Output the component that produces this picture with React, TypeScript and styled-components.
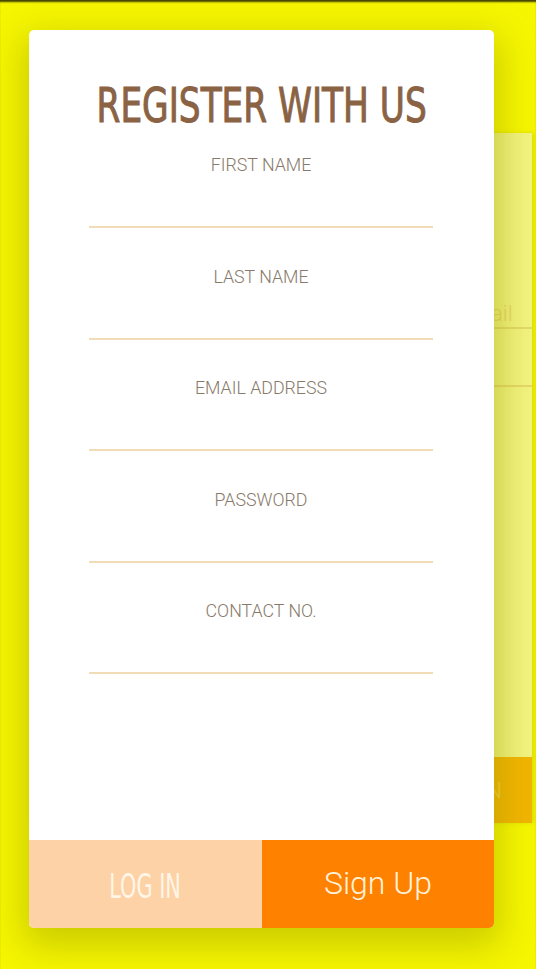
import styled, { createGlobalStyle } from 'styled-components';

const GlobalStyle = createGlobalStyle`
  html, body {
    margin: 0;
    padding: 0;
  }
  body {
    font-family: Roboto, 'Liberation Sans', sans-serif;
  }
`;

const Page = styled.div`
  box-sizing: border-box;
  width: 536px;
  height: 969px;
  overflow: hidden;
  padding: 30px 0 0 29px;
  background: #f6f600;
  box-shadow: inset 0 3px 2px -1px rgba(30, 30, 0, 0.85);
`;

const Stage = styled.div`
  display: grid;
  grid-template-columns: 465px 38px;
  grid-template-rows: 898px;
`;

const BackPanel = styled.div`
  grid-column: 1 / 3;
  grid-row: 1;
  align-self: start;
  margin-top: 103px;
  height: 690px;
  display: flex;
  flex-direction: column;
  align-items: flex-end;
  background: linear-gradient(90deg, #e6e76a 0%, #eef074 88%, #f3f482 100%);
  box-shadow: 2px 0 4px rgba(150, 150, 0, 0.25);
`;

const BackField = styled.div<{ top: number }>`
  box-sizing: border-box;
  width: 110px;
  height: 26px;
  margin-top: ${({ top }) => top}px;
  border-bottom: 2px solid #e4d86a;
  font-size: 22px;
  font-weight: 300;
  line-height: 22px;
  color: #e8d466;
  padding-left: 37px;
`;

const BackButton = styled.div`
  margin-top: auto;
  align-self: stretch;
  height: 66px;
  display: flex;
  align-items: center;
  justify-content: flex-end;
  padding-right: 30px;
  background: linear-gradient(90deg, #eda800, #f2b400);
  font-size: 22px;
  font-weight: 300;
  color: #f6cf3a;
`;

const Card = styled.div`
  grid-column: 1;
  grid-row: 1;
  z-index: 1;
  display: flex;
  flex-direction: column;
  background: #fff;
  border-radius: 5px;
  overflow: hidden;
  box-shadow: 0 12px 36px 6px rgba(150, 150, 0, 0.45);
`;

const Title = styled.h1`
  margin: 47px 0 0;
  height: 55px;
  display: flex;
  justify-content: center;
  align-items: center;
  font-family: 'DejaVu Sans Condensed', 'DejaVu Sans', sans-serif;
  font-weight: 400;
  font-size: 48px;
  color: #8a6244;
  -webkit-text-stroke: 1px #8a6244;
  white-space: nowrap;

  span {
    display: inline-block;
    transform: scaleX(0.795);
  }
`;

const Form = styled.div`
  display: flex;
  flex-direction: column;
  padding: 0 61px 0 60px;
`;

const Field = styled.div`
  display: flex;
  flex-direction: column;
  align-items: center;
  height: 111.5px;
`;

const Label = styled.label`
  margin-top: 23px;
  font-size: 17.8px;
  font-weight: 300;
  line-height: 20px;
  color: #887a6b;
`;

const Input = styled.div`
  align-self: stretch;
  margin-top: 51px;
  height: 2px;
  background: #f2dcb6;
`;

const Buttons = styled.div`
  margin-top: auto;
  display: grid;
  grid-template-columns: 233px 1fr;
  height: 88px;
`;

const Tab = styled.div<{ active?: boolean }>`
  display: flex;
  align-items: center;
  justify-content: center;
  background: ${({ active }) => (active ? '#ff8100' : '#fdd2a6')};
  color: ${({ active }) => (active ? '#fff3dc' : '#fff6e8')};
`;

const LoginText = styled.span`
  display: inline-block;
  margin-top: 4px;
  font-family: 'DejaVu Sans Condensed', 'DejaVu Sans', sans-serif;
  font-size: 33px;
  transform: scaleX(0.7);
`;

const SignUpText = styled.span`
  font-family: Roboto, sans-serif;
  font-weight: 300;
  font-size: 32px;
  margin-top: -2px;
`;

const fields = ['FIRST NAME', 'LAST NAME', 'EMAIL ADDRESS', 'PASSWORD', 'CONTACT NO.'];

const App = () => {
  return (
    <>
      <GlobalStyle />
      <Page>
        <Stage>
          <BackPanel>
            <BackField top={170}>Email</BackField>
            <BackField top={32} />
            <BackButton>N</BackButton>
          </BackPanel>
          <Card>
            <Title>
              <span>REGISTER WITH US</span>
            </Title>
            <Form>
              {fields.map((name) => (
                <Field key={name}>
                  <Label>{name}</Label>
                  <Input />
                </Field>
              ))}
            </Form>
            <Buttons>
              <Tab>
                <LoginText>LOG IN</LoginText>
              </Tab>
              <Tab active>
                <SignUpText>Sign Up</SignUpText>
              </Tab>
            </Buttons>
          </Card>
        </Stage>
      </Page>
    </>
  );
};

export default App;
